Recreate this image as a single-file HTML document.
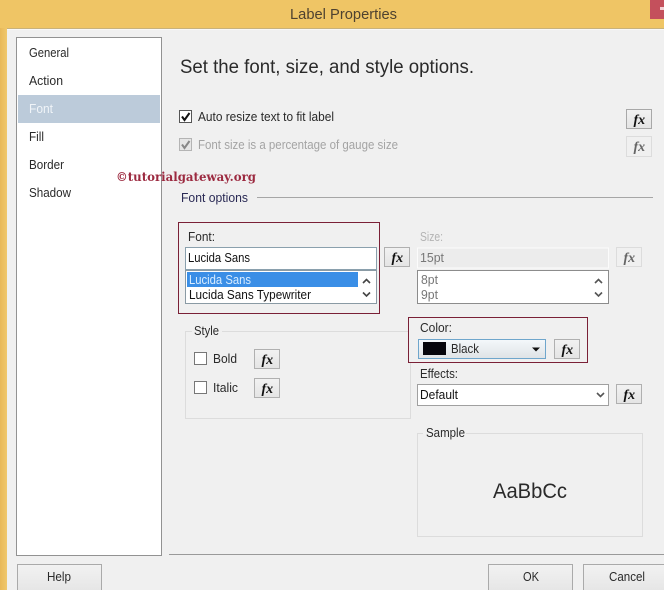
<!DOCTYPE html>
<html>
<head>
<meta charset="utf-8">
<title>Label Properties</title>
<style>
html,body{margin:0;padding:0;width:664px;height:590px;overflow:hidden;background:#f0f0f0}
svg{display:block}
text{font-family:"Liberation Sans",sans-serif;font-size:12.5px;fill:#2a2a2a}
.fx{font-family:"Liberation Serif",serif;font-weight:bold;font-style:italic;font-size:14px;fill:#111}
.fxd{font-family:"Liberation Serif",serif;font-weight:bold;font-style:italic;font-size:14px;fill:#666}
.d{fill:#a4a4a4}
</style>
</head>
<body>
<svg width="664" height="590" viewBox="0 0 664 590" xmlns="http://www.w3.org/2000/svg">
<defs>
<linearGradient id="btn" x1="0" y1="0" x2="0" y2="1"><stop offset="0" stop-color="#f2f2f2"/><stop offset="1" stop-color="#e4e4e4"/></linearGradient>
<linearGradient id="combo" x1="0" y1="0" x2="0" y2="1"><stop offset="0" stop-color="#f4f8fb"/><stop offset="1" stop-color="#dfe3e6"/></linearGradient>
<linearGradient id="edge" x1="0" y1="0" x2="1" y2="0"><stop offset="0" stop-color="#e8b858"/><stop offset="1" stop-color="#f0c86c"/></linearGradient>
</defs>

<!-- window frame -->
<rect x="0" y="0" width="664" height="590" fill="#f0f0f0"/>
<rect x="0" y="0" width="664" height="28" fill="#efc565"/>
<rect x="0" y="28" width="7" height="562" fill="url(#edge)"/>
<rect x="7" y="28" width="657" height="1" fill="#c8b27c"/>
<rect x="7" y="29" width="657" height="1" fill="#f8f8f8"/>
<rect x="650" y="0" width="14" height="19" fill="#c4505c"/>
<rect x="660" y="7" width="4" height="3" fill="#f3d0d4"/>
<text x="290" y="19" style="font-size:14.5px;fill:#4e4230" textLength="107" lengthAdjust="spacingAndGlyphs">Label Properties</text>

<!-- sidebar -->
<rect x="16.5" y="37.5" width="145" height="518" fill="#fff" stroke="#929292"/>
<rect x="18" y="95" width="142" height="28" fill="#bccbda"/>
<text x="29" y="57" textLength="40" lengthAdjust="spacingAndGlyphs">General</text>
<text x="29" y="85" textLength="34" lengthAdjust="spacingAndGlyphs">Action</text>
<text x="29" y="113" style="fill:#f0f4f8" textLength="24" lengthAdjust="spacingAndGlyphs">Font</text>
<text x="29" y="141" textLength="15" lengthAdjust="spacingAndGlyphs">Fill</text>
<text x="29" y="169" textLength="35" lengthAdjust="spacingAndGlyphs">Border</text>
<text x="29" y="197" textLength="42" lengthAdjust="spacingAndGlyphs">Shadow</text>

<!-- heading -->
<text x="180" y="73" style="font-size:19px;fill:#2a2a2a" textLength="294" lengthAdjust="spacingAndGlyphs">Set the font, size, and style options.</text>

<!-- auto resize -->
<rect x="179.5" y="110.5" width="12" height="12" fill="#fff" stroke="#555"/>
<path d="M182 116.5l2.5 3.5l5-7" fill="none" stroke="#111" stroke-width="2"/>
<text x="198" y="121" textLength="136" lengthAdjust="spacingAndGlyphs">Auto resize text to fit label</text>
<rect x="626.5" y="109.5" width="25" height="19" fill="url(#btn)" stroke="#a8a8a8"/>
<text class="fx" x="633.500" y="124">fx</text>

<rect x="179.5" y="138.5" width="12" height="12" fill="#e6e6e6" stroke="#b4b4b4"/>
<path d="M182 144.5l2.5 3.5l5-7" fill="none" stroke="#888" stroke-width="2"/>
<text class="d" x="198" y="149" textLength="200" lengthAdjust="spacingAndGlyphs">Font size is a percentage of gauge size</text>
<rect x="626.5" y="136.5" width="25" height="20" fill="#f0f0f0" stroke="#dcdcdc"/>
<text class="fxd" x="633.500" y="151">fx</text>

<!-- watermark -->
<text x="116" y="181" style="font-family:'DejaVu Serif','Liberation Serif',serif;font-weight:bold;font-size:12.5px;fill:#9c2a40" textLength="140" lengthAdjust="spacingAndGlyphs">©tutorialgateway.org</text>

<!-- font options -->
<text x="181" y="202" style="fill:#2a2a55" textLength="67" lengthAdjust="spacingAndGlyphs">Font options</text>
<rect x="257" y="197" width="396" height="1" fill="#a6a6a6"/>

<!-- font -->
<rect x="178.5" y="222.5" width="201" height="91" fill="none" stroke="#7a2036"/>
<text x="188" y="241" textLength="27" lengthAdjust="spacingAndGlyphs">Font:</text>
<rect x="185.5" y="247.5" width="191" height="22" fill="#fff" stroke="#8aa0ad"/>
<text x="188" y="262" style="fill:#111" textLength="62" lengthAdjust="spacingAndGlyphs">Lucida Sans</text>
<rect x="185.5" y="270.5" width="191" height="33" fill="#fff" stroke="#8a9aa4"/>
<rect x="187" y="272" width="171" height="15" fill="#3a8ee6"/>
<text x="189" y="284" style="fill:#d8ecff" textLength="62" lengthAdjust="spacingAndGlyphs">Lucida Sans</text>
<text x="189" y="299" style="fill:#111" textLength="122" lengthAdjust="spacingAndGlyphs">Lucida Sans Typewriter</text>
<path d="M363 283l3.500-3.500l3.500 3.500" fill="none" stroke="#444" stroke-width="1.600"/>
<path d="M363 292.500l3.500 3.500l3.500-3.500" fill="none" stroke="#444" stroke-width="1.600"/>
<rect x="384.5" y="247.5" width="25" height="19" fill="url(#btn)" stroke="#b0b0b0"/>
<text class="fx" x="391.500" y="262">fx</text>

<!-- size -->
<text class="d" x="420" y="241" style="fill:#b4b4b4" textLength="23" lengthAdjust="spacingAndGlyphs">Size:</text>
<rect x="417.5" y="248" width="191" height="20" fill="#ececec" stroke="#fbfbfb"/>
<text x="420" y="262" style="fill:#777" textLength="24" lengthAdjust="spacingAndGlyphs">15pt</text>
<rect x="417.500" y="270.500" width="191" height="33" fill="#fff" stroke="#8c8c8c"/>
<text x="421" y="284" style="fill:#777" textLength="17" lengthAdjust="spacingAndGlyphs">8pt</text>
<text x="421" y="299" style="fill:#777" textLength="17" lengthAdjust="spacingAndGlyphs">9pt</text>
<path d="M595 283l3.500-3.500l3.500 3.500" fill="none" stroke="#555" stroke-width="1.600"/>
<path d="M595 292.500l3.500 3.500l3.500-3.500" fill="none" stroke="#555" stroke-width="1.600"/>
<rect x="616.500" y="247.500" width="25" height="19" fill="#f0f0f0" stroke="#dcdcdc"/>
<text class="fxd" x="623.500" y="262">fx</text>

<!-- style group -->
<path d="M192 331.500H185.500V418.500H410.500V331.500H222" fill="none" stroke="#dcdcdc"/>
<text x="194" y="335" textLength="25" lengthAdjust="spacingAndGlyphs">Style</text>
<rect x="194.500" y="352.500" width="12" height="12" fill="#fff" stroke="#777"/>
<text x="213" y="363" textLength="24" lengthAdjust="spacingAndGlyphs">Bold</text>
<rect x="254.500" y="349.500" width="25" height="19" fill="url(#btn)" stroke="#b0b0b0"/>
<text class="fx" x="261.500" y="364">fx</text>
<rect x="194.500" y="381.500" width="12" height="12" fill="#fff" stroke="#777"/>
<text x="213" y="392" textLength="25" lengthAdjust="spacingAndGlyphs">Italic</text>
<rect x="254.500" y="378.500" width="25" height="19" fill="url(#btn)" stroke="#b0b0b0"/>
<text class="fx" x="261.500" y="393">fx</text>

<!-- color -->
<rect x="408.500" y="317.500" width="179" height="45" fill="#f0f0f0" stroke="#7a2036"/>
<text x="420" y="332" textLength="32" lengthAdjust="spacingAndGlyphs">Color:</text>
<rect x="418.500" y="339.500" width="127" height="19" fill="url(#combo)" stroke="#6fa6cc"/>
<rect x="423" y="342" width="23" height="13" fill="#05050c"/>
<text x="451" y="353" textLength="28" lengthAdjust="spacingAndGlyphs">Black</text>
<path d="M532 347.500h8l-4 4z" fill="#111"/>
<rect x="554.500" y="339.500" width="25" height="19" fill="url(#btn)" stroke="#b0b0b0"/>
<text class="fx" x="561.500" y="354">fx</text>

<!-- effects -->
<text x="420" y="378" textLength="38" lengthAdjust="spacingAndGlyphs">Effects:</text>
<rect x="417.500" y="384.500" width="191" height="21" fill="#fff" stroke="#a0a0a0"/>
<text x="420" y="399" style="fill:#111" textLength="38" lengthAdjust="spacingAndGlyphs">Default</text>
<path d="M597 393l3.500 3.500l3.500-3.500" fill="none" stroke="#555" stroke-width="1.600"/>
<rect x="616.500" y="384.500" width="25" height="19" fill="url(#btn)" stroke="#b0b0b0"/>
<text class="fx" x="623.500" y="399">fx</text>

<!-- sample -->
<path d="M423 433.500H417.500V536.500H642.500V433.500H466" fill="none" stroke="#dcdcdc"/>
<text x="426" y="437" textLength="39" lengthAdjust="spacingAndGlyphs">Sample</text>
<text x="493" y="498" style="font-size:21px;fill:#2a2a2a" textLength="74" lengthAdjust="spacingAndGlyphs">AaBbCc</text>

<!-- footer -->
<rect x="169" y="554" width="495" height="1" fill="#9a9a9a"/>
<rect x="17.500" y="564.500" width="84" height="30" fill="url(#btn)" stroke="#aaaaaa"/>
<text x="47" y="581" style="font-size:13px" textLength="24" lengthAdjust="spacingAndGlyphs">Help</text>
<rect x="488.500" y="564.500" width="84" height="30" fill="url(#btn)" stroke="#aaaaaa"/>
<text x="523" y="581" style="font-size:13px" textLength="16" lengthAdjust="spacingAndGlyphs">OK</text>
<rect x="583.500" y="564.500" width="90" height="30" fill="url(#btn)" stroke="#aaaaaa"/>
<text x="609" y="581" style="font-size:13px" textLength="36" lengthAdjust="spacingAndGlyphs">Cancel</text>
</svg>
</body>
</html>
